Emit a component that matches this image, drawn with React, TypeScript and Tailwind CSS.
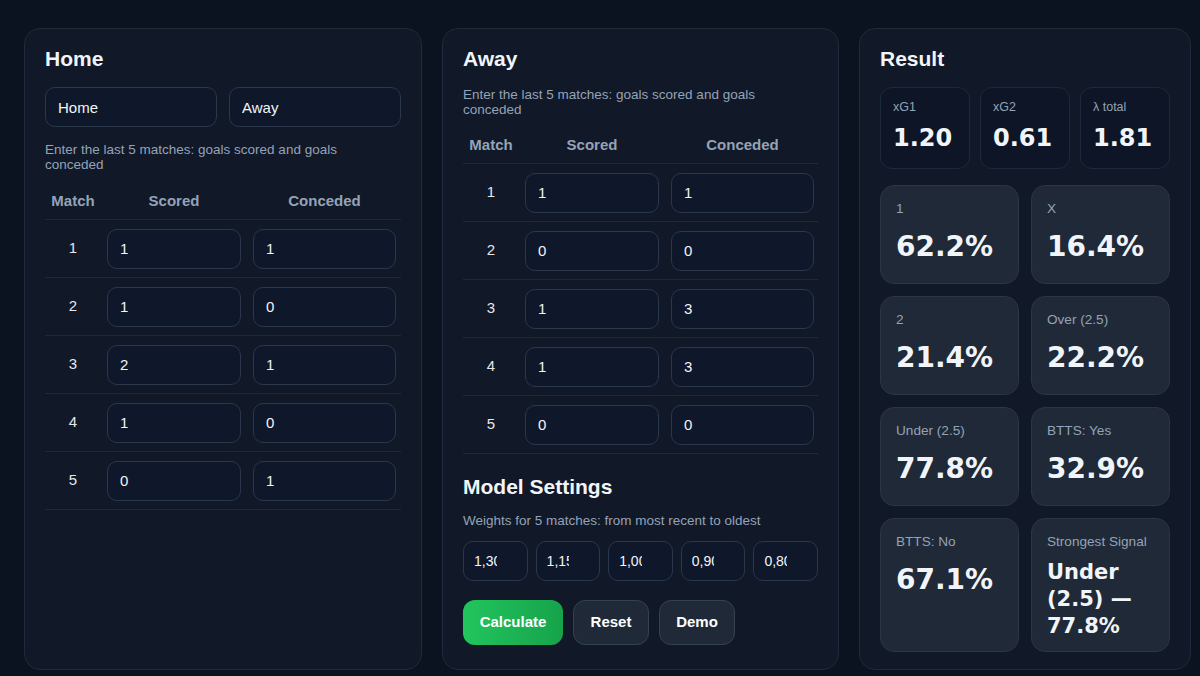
import React from "react";

const rowsHome = [
  [1, "1", "1"],
  [2, "1", "0"],
  [3, "2", "1"],
  [4, "1", "0"],
  [5, "0", "1"],
];
const rowsAway = [
  [1, "1", "1"],
  [2, "0", "0"],
  [3, "1", "3"],
  [4, "1", "3"],
  [5, "0", "0"],
];

const inputCls =
  "w-full h-10 rounded-[10px] border border-[#2b374a] bg-[#0f172a] pl-[12px] text-[15px] text-[#f1f5f9] outline-none";

function MatchTable({ rows }: { rows: (string | number)[][] }) {
  return (
    <div className="flex flex-col">
      <div className="grid grid-cols-[56px_146px_155px] h-[36px] items-center border-b border-[#1f2937] text-[15px] font-bold text-[#94a3b8]">
        <div className="text-center">Match</div>
        <div className="text-center">Scored</div>
        <div className="text-center">Conceded</div>
      </div>
      {rows.map((r) => (
        <div
          key={String(r[0])}
          className="grid grid-cols-[56px_146px_155px] h-[58px] items-center border-b border-[#1f2937]"
        >
          <div className="text-center text-[15px] text-[#e5e7eb]">{r[0]}</div>
          <div className="px-[6px]">
            <input className={inputCls} defaultValue={String(r[1])} />
          </div>
          <div className="px-[6px]">
            <input className={inputCls} defaultValue={String(r[2])} />
          </div>
        </div>
      ))}
    </div>
  );
}

function Heading({ children }: { children: React.ReactNode }) {
  return <h2 className="m-0 text-[21px] leading-[20px] font-bold text-[#f1f5f9]">{children}</h2>;
}

const heavy = { fontFamily: '"DejaVu Sans", sans-serif' };

function SmallStat({ label, value }: { label: string; value: string }) {
  return (
    <div className="h-[82px] rounded-[12px] border border-[#1e293b] bg-[#0d1526] px-[12px] pt-[12px]">
      <div className="text-[12.5px] leading-[15px] text-[#94a3b8]">{label}</div>
      <div className="mt-[9px] text-[24px] leading-[29px] font-bold text-[#f1f5f9]" style={heavy}>
        {value}
      </div>
    </div>
  );
}

function BigStat({ label, value, tall }: { label: string; value: string; tall?: boolean }) {
  return (
    <div
      className={
        "rounded-[14px] border border-[#2a3547] bg-[#1f2937] px-[15px] pt-[15px] " +
        (tall ? "h-[134px]" : "h-[99px]")
      }
    >
      <div className="text-[13.6px] leading-[16px] text-[#94a3b8]">{label}</div>
      <div className="mt-[13px] text-[28px] leading-[34px] font-bold text-[#f1f5f9]" style={heavy}>
        {value}
      </div>
    </div>
  );
}

const btnGray =
  "h-[45px] w-[76px] rounded-[12px] border border-[#334155] bg-[#1f2937] text-[15px] font-bold text-white";

export default function App() {
  return (
    <div
      className="min-h-screen w-full overflow-hidden bg-[#0b1220] pl-[24px] pt-[28px]"
      style={{ fontFamily: '"Liberation Sans", Arial, sans-serif' }}
    >
      <div className="grid grid-cols-[398px_397px_332px] gap-x-[20px]">
        {/* Home */}
        <div className="h-[642px] rounded-[16px] border border-[#1f2a3b] bg-[#111827] p-5">
          <Heading>Home</Heading>
          <div className="mt-[18px] grid grid-cols-2 gap-3">
            <input className={inputCls} defaultValue="Home" />
            <input className={inputCls} defaultValue="Away" />
          </div>
          <p className="m-0 mt-[15px] max-w-[340px] text-[13.5px] leading-[15px] text-[#94a3b8]">
            Enter the last 5 matches: goals scored and goals conceded
          </p>
          <div className="mt-[12px]">
            <MatchTable rows={rowsHome} />
          </div>
        </div>

        {/* Away */}
        <div className="h-[642px] rounded-[16px] border border-[#1f2a3b] bg-[#111827] p-5">
          <Heading>Away</Heading>
          <p className="m-0 mt-[18px] max-w-[340px] text-[13.5px] leading-[15px] text-[#94a3b8]">
            Enter the last 5 matches: goals scored and goals conceded
          </p>
          <div className="mt-[11px]">
            <MatchTable rows={rowsAway} />
          </div>
          <div className="mt-[23px]">
            <Heading>Model Settings</Heading>
          </div>
          <p className="m-0 mt-[16px] text-[13.5px] leading-[15px] text-[#94a3b8]">
            Weights for 5 matches: from most recent to oldest
          </p>
          <div className="mt-[13px] grid grid-cols-5 gap-2">
            {["1,30", "1,15", "1,00", "0,90", "0,80"].map((w) => (
              <input
                key={w}
                className="w-full h-10 rounded-[10px] border border-[#2b374a] bg-[#0f172a] pl-[10px] pr-[30px] text-[14px] text-[#f1f5f9] outline-none"
                defaultValue={w}
              />
            ))}
          </div>
          <div className="mt-[19px] flex gap-[10px]">
            <button className="h-[45px] w-[100px] rounded-[12px] bg-gradient-to-r from-[#22c55e] to-[#16a34a] text-[15px] font-bold text-white">
              Calculate
            </button>
            <button className={btnGray}>Reset</button>
            <button className={btnGray}>Demo</button>
          </div>
        </div>

        {/* Result */}
        <div className="h-[642px] rounded-[16px] border border-[#1f2a3b] bg-[#111827] p-5">
          <Heading>Result</Heading>
          <div className="mt-[18px] grid grid-cols-3 gap-[10px]">
            <SmallStat label="xG1" value="1.20" />
            <SmallStat label="xG2" value="0.61" />
            <SmallStat label="λ total" value="1.81" />
          </div>
          <div className="mt-[16px] grid grid-cols-2 gap-3">
            <BigStat label="1" value="62.2%" />
            <BigStat label="X" value="16.4%" />
            <BigStat label="2" value="21.4%" />
            <BigStat label="Over (2.5)" value="22.2%" />
            <BigStat label="Under (2.5)" value="77.8%" />
            <BigStat label="BTTS: Yes" value="32.9%" />
            <BigStat label="BTTS: No" value="67.1%" tall />
            <div className="h-[134px] rounded-[14px] border border-[#2a3547] bg-[#1f2937] px-[15px] pt-[15px]">
              <div className="text-[13.6px] leading-[16px] text-[#94a3b8]">Strongest Signal</div>
              <div className="mt-[9px] text-[21px] leading-[27px] font-bold text-[#f1f5f9]" style={heavy}>
                Under (2.5) — 77.8%
              </div>
            </div>
          </div>
        </div>
      </div>
    </div>
  );
}
